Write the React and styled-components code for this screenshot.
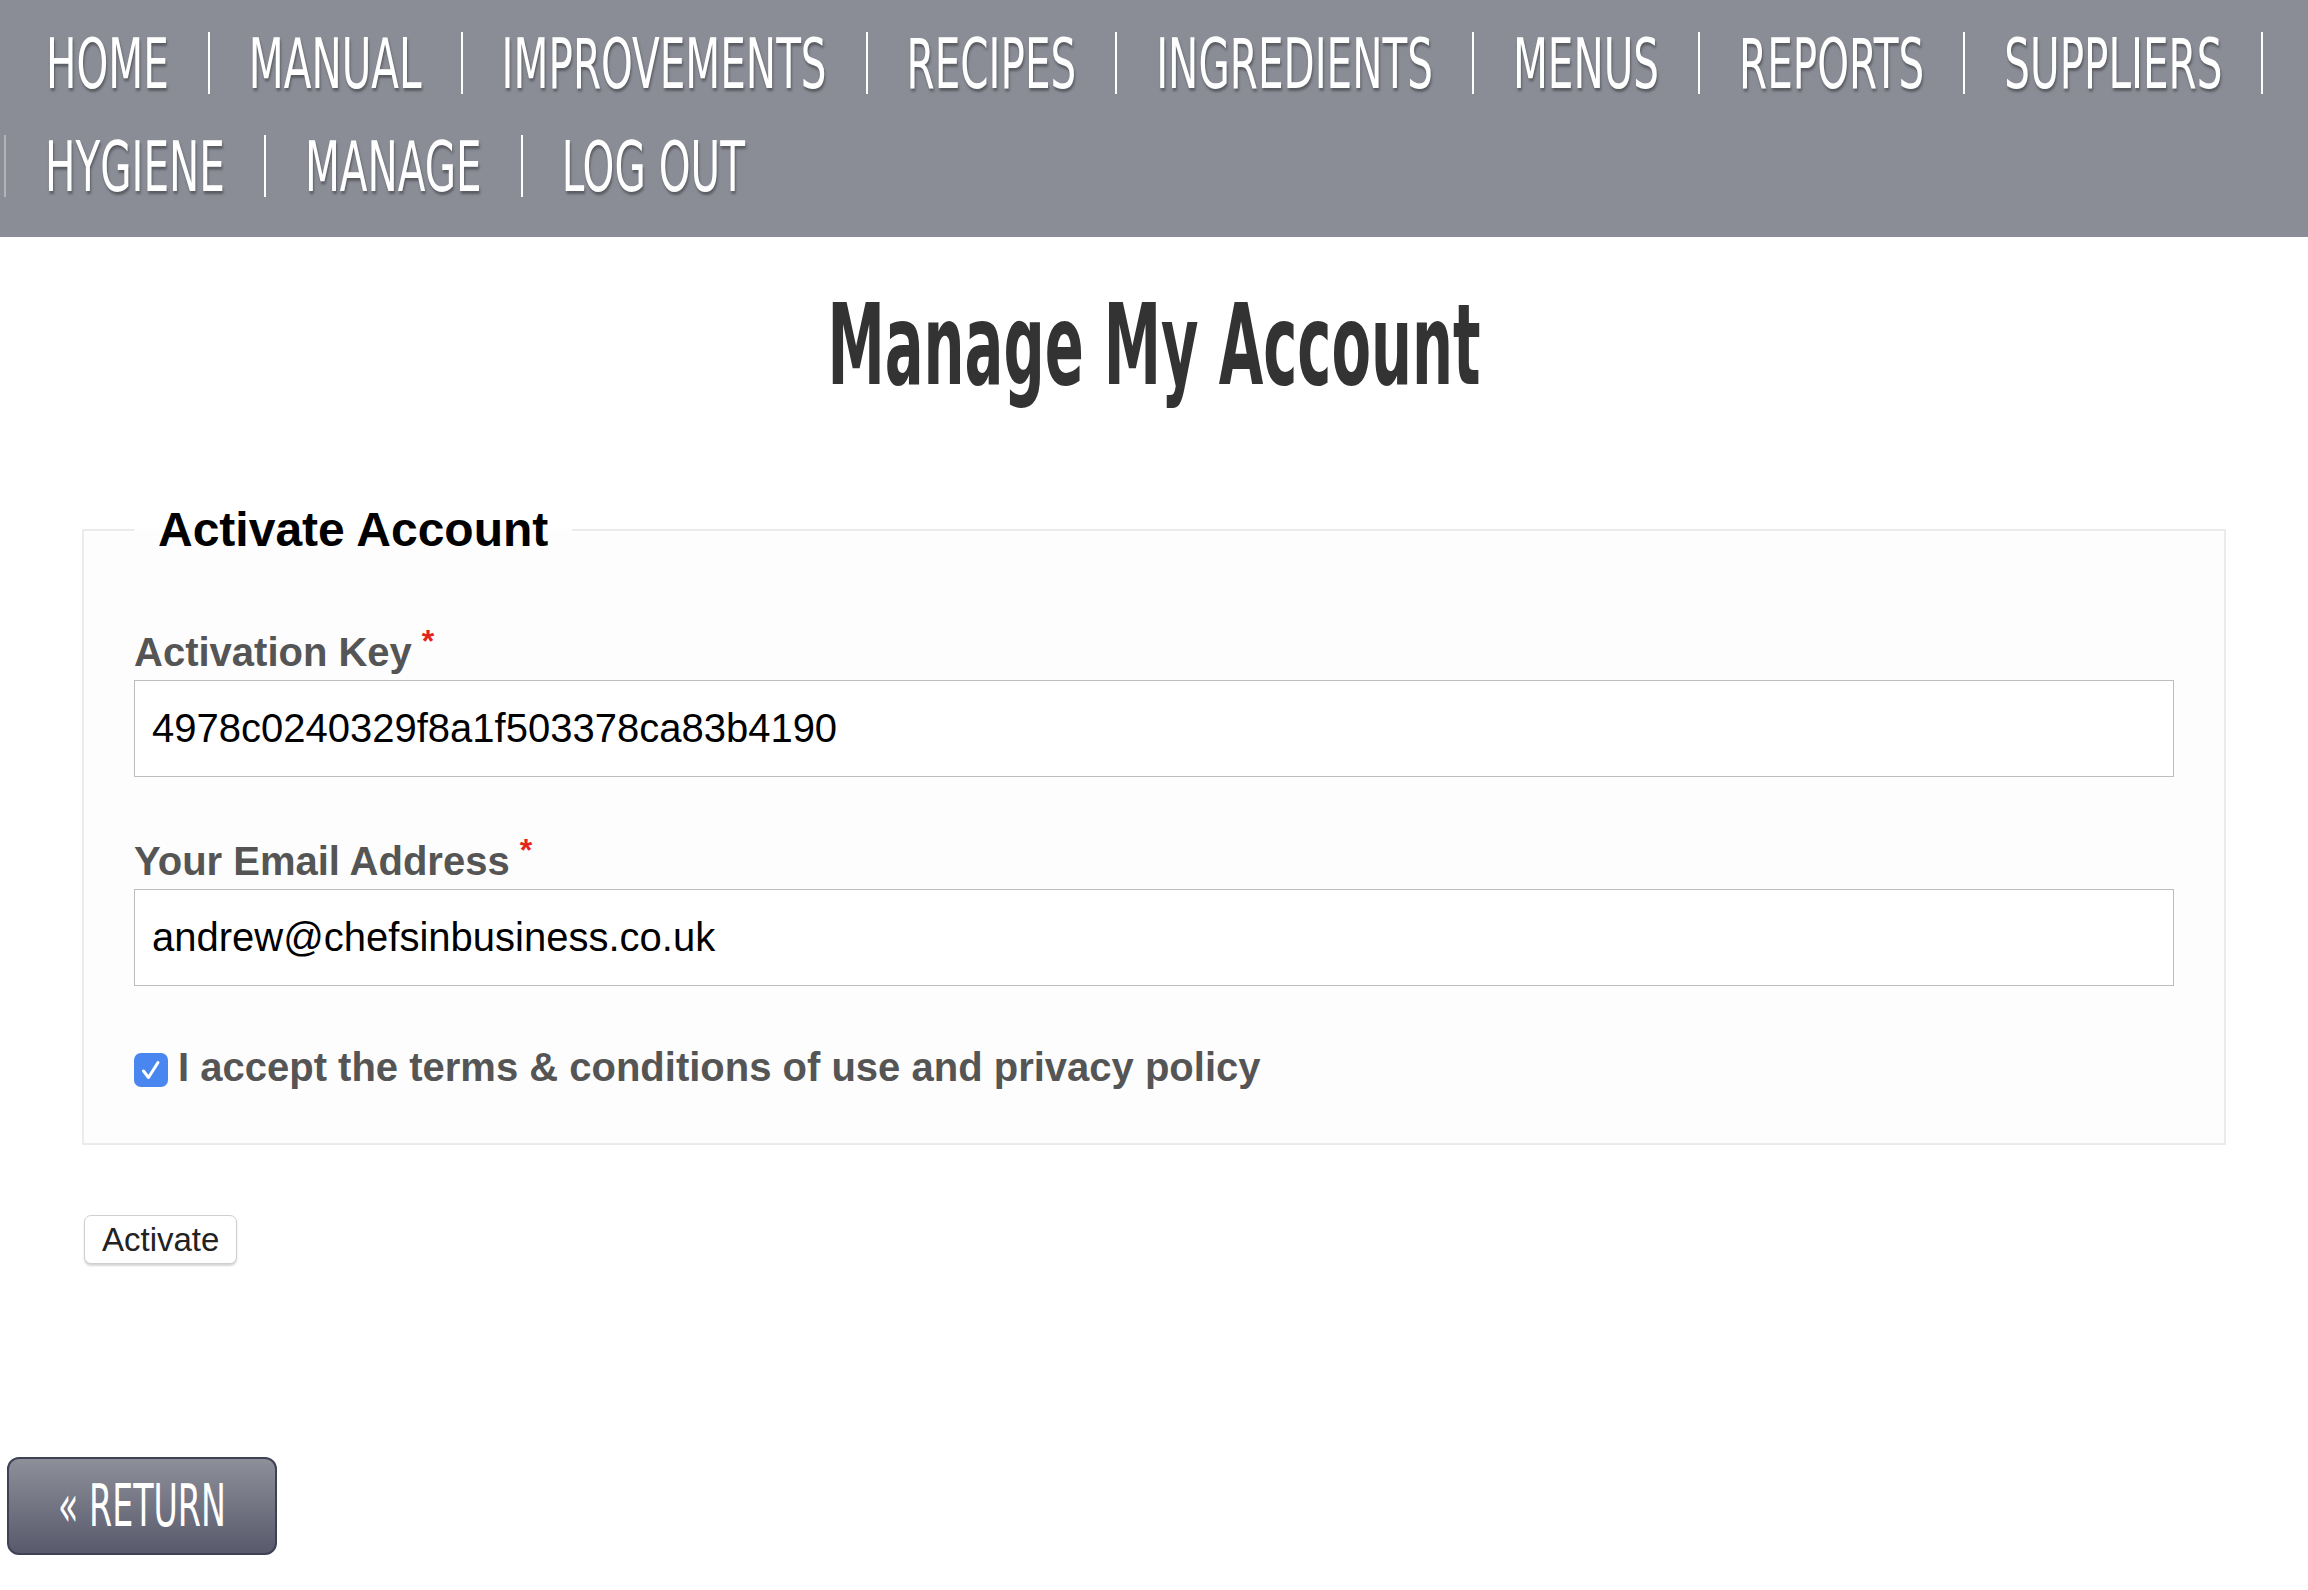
import React from 'react';
import styled, { createGlobalStyle } from 'styled-components';

const GlobalStyle = createGlobalStyle`
  body {
    margin: 0;
    background: #fff;
    font-family: "Liberation Sans", Arial, sans-serif;
  }
`;

const NARROW = `"DejaVu Sans Condensed", "Liberation Sans", sans-serif`;

const NavBar = styled.nav`
  background: #8a8d96;
  padding: 32px 0 40px 4px;
`;

const NavList = styled.ul`
  display: flex;
  flex-wrap: wrap;
  row-gap: 41px;
  list-style: none;
  margin: 0;
  padding: 0;
`;

const NavItem = styled.li`
  display: flex;
  align-items: center;
  height: 62px;
  padding: 0 39px;
  border-left: 2px solid ${props => props.$faint ? 'rgba(255,255,255,0.35)' : 'transparent'};
  border-right: 2px solid ${props => props.$last ? 'transparent' : '#fff'};
  margin-left: ${props => props.$faint ? '0' : '-2px'};

  &:first-child {
    margin-left: 0;
    padding-left: 40px;
  }
`;

const NavLink = styled.a`
  display: inline-block;
  font-family: ${NARROW};
  font-size: 45px;
  color: #fff;
  text-decoration: none;
  text-shadow: 1px 2px 2px rgba(0, 0, 0, 0.35);
  transform: scaleY(1.56);
  line-height: 1;
`;

const Main = styled.main`
  padding: 0 82px;
`;

const Title = styled.h1`
  margin: 0;
  padding: 77px 0 124px;
  text-align: center;
  line-height: 1;

  span {
    display: inline-block;
    font-family: ${NARROW};
    font-weight: bold;
    font-size: 64px;
    color: #333;
    transform: scaleY(1.74);
  }
`;

const Fieldset = styled.fieldset`
  margin: 0;
  padding: 0 50px 53px;
  border: 2px solid #ebebeb;
  background: #fdfdfd;
`;

const Legend = styled.legend`
  padding: 0 24px;
  font-size: 48px;
  font-weight: bold;
  color: #000;
`;

const Field = styled.div`
  margin-top: ${props => props.$top}px;
`;

const Label = styled.label`
  display: block;
  font-size: 40px;
  line-height: 46px;
  font-weight: bold;
  color: #555;
  margin-bottom: 5px;
`;

const Required = styled.sup`
  color: #e3241b;
  font-size: 32px;
  margin-left: 10px;
  vertical-align: 14px;
`;

const Input = styled.input`
  display: block;
  width: 100%;
  box-sizing: border-box;
  height: 97px;
  padding: 0 17px;
  border: 1px solid #bdbdbd;
  font-family: "Liberation Sans", Arial, sans-serif;
  font-size: 40px;
  color: #000;
  background: #fff;
  outline: none;
`;

const CheckRow = styled.label`
  display: flex;
  align-items: center;
  gap: 10px;
  margin-top: 58px;
  font-size: 40px;
  line-height: 46px;
  font-weight: bold;
  color: #555;
`;

const CheckBox = styled.span`
  display: inline-flex;
  align-items: center;
  justify-content: center;
  width: 34px;
  height: 34px;
  border-radius: 7px;
  background: #4a86f0;
  flex-shrink: 0;
  margin-top: 6px;
`;

const ActivateButton = styled.button`
  display: block;
  margin: 70px 0 0 2px;
  height: 49px;
  padding: 0 17px;
  font-family: "Liberation Sans", Arial, sans-serif;
  font-size: 33px;
  color: #222;
  background: #fff;
  border: 1px solid #cfcfcf;
  border-radius: 7px;
  box-shadow: 0 2px 2px rgba(0, 0, 0, 0.16);
`;

const Footer = styled.footer`
  padding: 193px 0 0 7px;
`;

const ReturnButton = styled.a`
  display: inline-flex;
  align-items: center;
  justify-content: center;
  box-sizing: border-box;
  width: 270px;
  height: 98px;
  border: 2px solid #3f4155;
  border-radius: 12px;
  background: linear-gradient(#8d8f99, #585a6c);
  text-decoration: none;

  span {
    display: inline-block;
    font-family: ${NARROW};
    font-size: 37px;
    color: #fff;
    transform: scaleY(1.6);
  }
`;

const navItems = [
  'HOME', 'MANUAL', 'IMPROVEMENTS', 'RECIPES', 'INGREDIENTS', 'MENUS',
  'REPORTS', 'SUPPLIERS', 'HYGIENE', 'MANAGE', 'LOG OUT'
];

function App() {
  return (
    <>
      <GlobalStyle />
      <NavBar>
        <NavList>
          {navItems.map((item, i) => (
            <NavItem
              key={item}
              $faint={item === 'HYGIENE'}
              $last={i === navItems.length - 1}
            >
              <NavLink href="#">{item}</NavLink>
            </NavItem>
          ))}
        </NavList>
      </NavBar>

      <Main>
        <Title><span>Manage My Account</span></Title>

        <Fieldset>
          <Legend>Activate Account</Legend>

          <Field $top={61}>
            <Label>Activation Key<Required>*</Required></Label>
            <Input defaultValue="4978c0240329f8a1f503378ca83b4190" />
          </Field>

          <Field $top={50}>
            <Label>Your Email Address<Required>*</Required></Label>
            <Input defaultValue="andrew@chefsinbusiness.co.uk" />
          </Field>

          <CheckRow>
            <CheckBox>
              <svg width="34" height="34" viewBox="0 0 34 34">
                <path d="M9.5 18 L14.5 24.5 L24 9.5" fill="none" stroke="#fff" strokeWidth="3" strokeLinecap="round" strokeLinejoin="round" />
              </svg>
            </CheckBox>
            I accept the terms &amp; conditions of use and privacy policy
          </CheckRow>
        </Fieldset>

        <ActivateButton>Activate</ActivateButton>
      </Main>

      <Footer>
        <ReturnButton href="#"><span>« RETURN</span></ReturnButton>
      </Footer>
    </>
  );
}

export default App;
